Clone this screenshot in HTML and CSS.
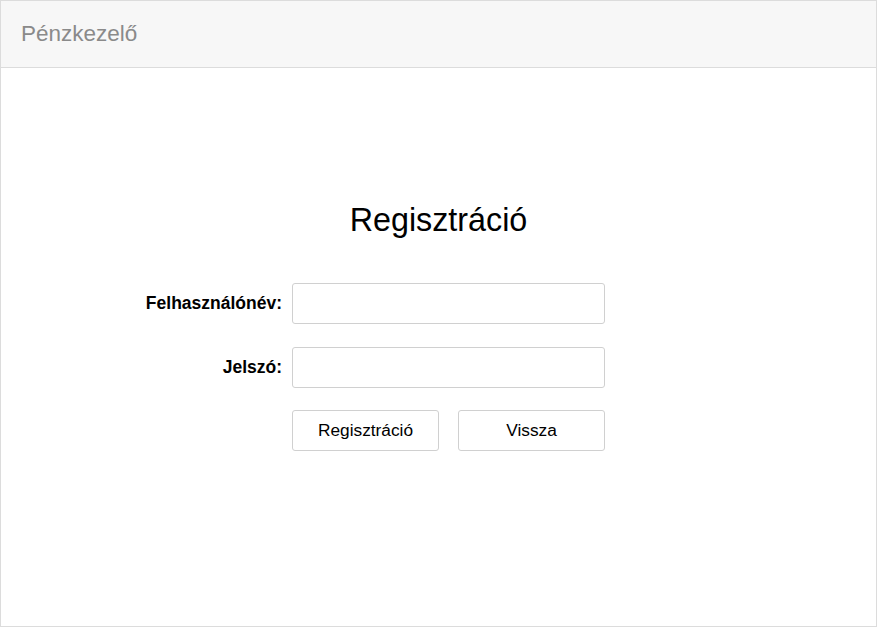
FILE: index.html
```html
<!DOCTYPE html>
<html lang="hu">
<head>
<meta charset="utf-8">
<title>Pénzkezelő</title>
<link rel="stylesheet" href="styles.css">
</head>
<body>
<div class="frame">
  <header class="topbar">
    <span class="brand">Pénzkezelő</span>
  </header>
  <main class="content">
    <h1 class="title">Regisztráció</h1>
    <form class="form">
      <label class="label" for="user">Felhasználónév:</label>
      <input class="input" id="user" type="text">
      <label class="label" for="pass">Jelszó:</label>
      <input class="input" id="pass" type="password">
      <span></span>
      <div class="buttons">
        <button class="btn" type="button">Regisztráció</button>
        <button class="btn" type="button">Vissza</button>
      </div>
    </form>
  </main>
</div>
</body>
</html>
```
FILE: styles.css
```css
html, body {
  margin: 0;
  padding: 0;
  background: #fff;
}
body {
  font-family: "Liberation Sans", Arial, sans-serif;
  color: #000;
}
.frame {
  box-sizing: border-box;
  width: 877px;
  height: 627px;
  border: 1px solid #dcdcdc;
  display: flex;
  flex-direction: column;
}
.topbar {
  box-sizing: border-box;
  height: 67px;
  background: #f7f7f7;
  border-bottom: 1px solid #dcdcdc;
  display: flex;
  align-items: center;
  padding-left: 20px;
}
.brand {
  font-size: 22.5px;
  color: #8a8a8a;
}
.content {
  flex: 1;
  display: flex;
  flex-direction: column;
}
.title {
  margin: 134px 0 0 0;
  text-align: center;
  font-size: 32.3px;
  font-weight: normal;
  line-height: 37px;
}
.form {
  margin-top: 44px;
  display: grid;
  grid-template-columns: 281px 313px;
  column-gap: 10px;
  row-gap: 23px;
  align-items: center;
}
.label {
  text-align: right;
  font-weight: bold;
  font-size: 17.5px;
}
.input {
  box-sizing: border-box;
  height: 41px;
  width: 313px;
  border: 1px solid #d0d0d0;
  border-radius: 3px;
  margin: 0;
  padding: 0 8px;
  font-size: 16px;
  font-family: inherit;
}
.buttons {
  display: flex;
  gap: 19px;
  margin-top: -1px;
}
.btn {
  box-sizing: border-box;
  width: 147px;
  height: 41px;
  background: #fff;
  border: 1px solid #d0d0d0;
  border-radius: 3px;
  font-family: inherit;
  font-size: 17.3px;
  color: #000;
  margin: 0;
}
```
